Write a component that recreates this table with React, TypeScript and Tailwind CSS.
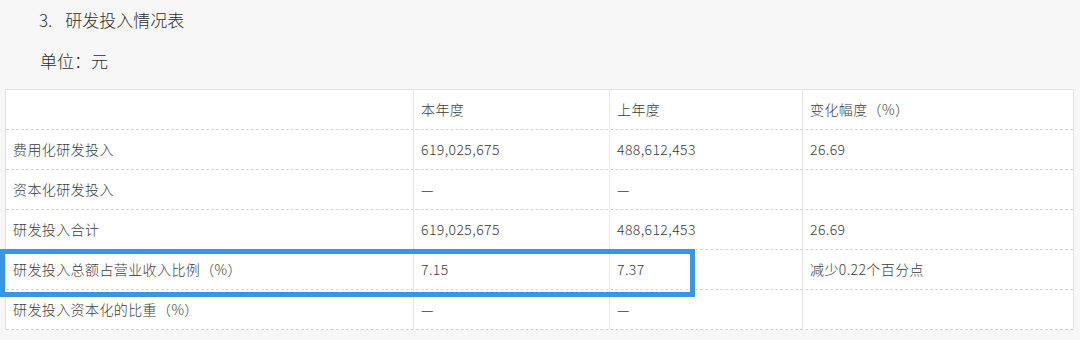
const rows = [
  ["费用化研发投入", "619,025,675", "488,612,453", "26.69"],
  ["资本化研发投入", "—", "—", ""],
  ["研发投入合计", "619,025,675", "488,612,453", "26.69"],
  ["研发投入总额占营业收入比例（%）", "7.15", "7.37", "减少0.22个百分点"],
  ["研发投入资本化的比重（%）", "—", "—", ""],
];

const font = "font-['Noto_Sans_CJK_SC',sans-serif]";

function Cell({ text, last }: { text: string; last?: boolean }) {
  return (
    <div
      className={`flex items-center pl-[7px] text-[14px] font-light text-[#3c3c3c] tracking-[0.4px] ${
        last ? "" : "border-r border-[#e6e6e6]"
      }`}
    >
      {text}
    </div>
  );
}

export default function App() {
  return (
    <div className={`relative w-[1080px] h-[340px] overflow-hidden bg-[#f7f7f7] ${font}`}>
      {/* 标题 */}
      <div className="pl-[39px] pt-[9px] h-[40px] text-[17px] leading-[21px] font-light text-[#2e2e2e]">
        3.<span className="ml-[13px]">研发投入情况表</span>
      </div>
      <div className="pl-[40px] pt-[10px] h-[49px] text-[17px] leading-[21px] font-light text-[#2e2e2e]">
        单位：元
      </div>

      {/* 表格 */}
      <div className="ml-[5px] w-[1069px] bg-white border-t border-l border-r border-[#e2e2e2]">
        <div className="grid grid-cols-[408px_196px_193px_270px] h-[40px] border-b border-dashed border-[#d4d4d4]">
          <Cell text="" />
          <Cell text="本年度" />
          <Cell text="上年度" />
          <Cell text="变化幅度（%）" last />
        </div>
        {rows.map((r, i) => (
          <div
            key={i}
            className="grid grid-cols-[408px_196px_193px_270px] h-[40px] border-b border-dashed border-[#d4d4d4]"
          >
            <Cell text={r[0]} />
            <Cell text={r[1]} />
            <Cell text={r[2]} />
            <Cell text={r[3]} last />
          </div>
        ))}
      </div>

      {/* 标注框 */}
      <div className="absolute left-0 top-[249px] w-[695px] h-[48px] border-[5px] border-[#3a96e2]" />
    </div>
  );
}
